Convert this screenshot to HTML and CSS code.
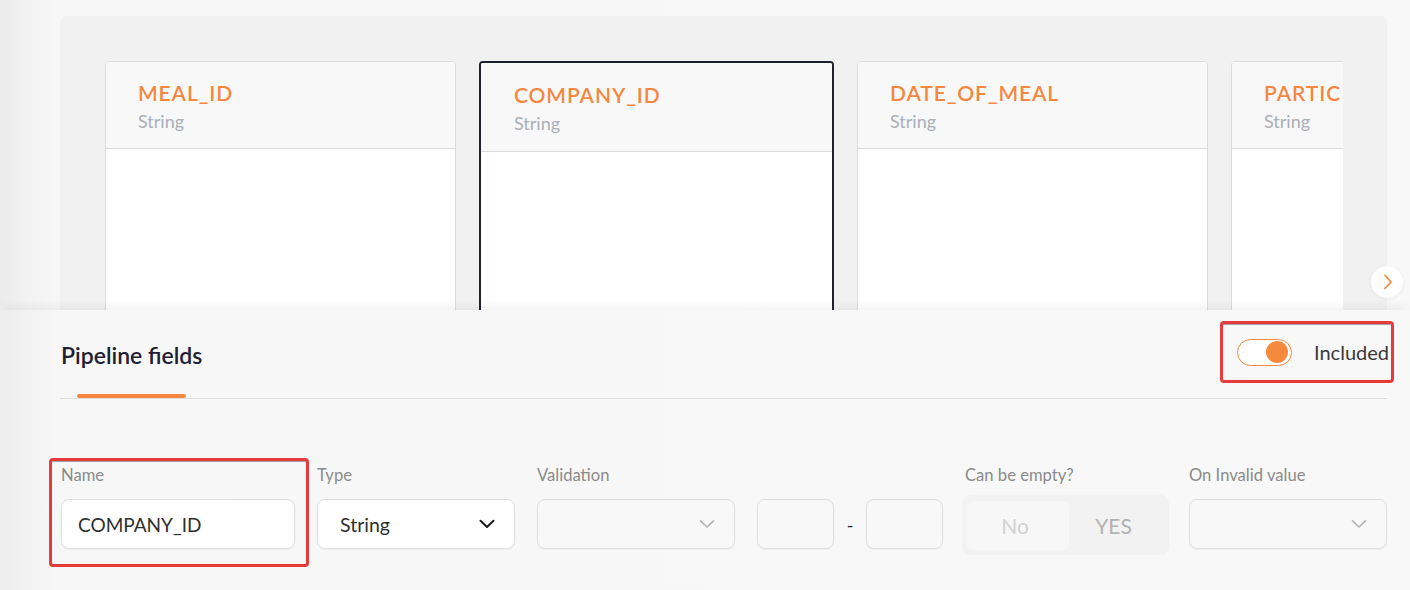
FILE: index.html
```html
<!DOCTYPE html>
<html lang="en">
<head>
<meta charset="utf-8">
<title>Pipeline fields</title>
<link rel="stylesheet" href="styles.css">
</head>
<body>
<div class="page">
  <section class="schema">
    <div class="schema-panel">
      <div class="track">
        <article class="card">
          <header class="card-head">
            <h3 class="card-title">MEAL_ID</h3>
            <p class="card-type">String</p>
          </header>
          <div class="card-body"></div>
        </article>
        <article class="card card--selected">
          <header class="card-head">
            <h3 class="card-title">COMPANY_ID</h3>
            <p class="card-type">String</p>
          </header>
          <div class="card-body"></div>
        </article>
        <article class="card">
          <header class="card-head">
            <h3 class="card-title">DATE_OF_MEAL</h3>
            <p class="card-type">String</p>
          </header>
          <div class="card-body"></div>
        </article>
        <article class="card">
          <header class="card-head">
            <h3 class="card-title">PARTIC</h3>
            <p class="card-type">String</p>
          </header>
          <div class="card-body"></div>
        </article>
      </div>
    </div>
    <button class="next" aria-label="Next">
      <svg width="10" height="16" viewBox="0 0 10 16"><path d="M2 1.5 L8 8 L2 14.5" fill="none" stroke="#f5873f" stroke-width="1.8" stroke-linecap="round" stroke-linejoin="round"/></svg>
    </button>
  </section>

  <section class="fields">
    <div class="fields-head">
      <div class="tab">
        <span class="tab-label">Pipeline fields</span>
        <span class="tab-bar"></span>
      </div>
      <div class="annot annot--toggle">
        <span class="toggle"><span class="knob"></span></span>
        <span class="toggle-label">Included</span>
      </div>
    </div>

    <div class="form-row">
      <div class="annot annot--name">
        <div class="field field--name">
          <label class="field-label">Name</label>
          <div class="input input--active">COMPANY_ID</div>
        </div>
      </div>
      <div class="field field--type">
        <label class="field-label">Type</label>
        <div class="select input--active">
          <span>String</span>
          <svg class="chev" width="16" height="10" viewBox="0 0 16 10"><path d="M1.5 1.8 L8 8 L14.5 1.8" fill="none" stroke="#1c1c1c" stroke-width="2" stroke-linecap="round" stroke-linejoin="round"/></svg>
        </div>
      </div>
      <div class="field field--validation">
        <label class="field-label">Validation</label>
        <div class="select select--disabled">
          <span></span>
          <svg class="chev" width="16" height="10" viewBox="0 0 16 10"><path d="M1.5 1.8 L8 8 L14.5 1.8" fill="none" stroke="#b3b3b3" stroke-width="1.6" stroke-linecap="round" stroke-linejoin="round"/></svg>
        </div>
      </div>
      <div class="field field--range">
        <span class="field-label">&nbsp;</span>
        <div class="range">
          <div class="input input--small"></div>
          <span class="dash">-</span>
          <div class="input input--small"></div>
        </div>
      </div>
      <div class="field field--empty">
        <label class="field-label">Can be empty?</label>
        <div class="segment">
          <span class="seg seg--on">No</span>
          <span class="seg">YES</span>
        </div>
      </div>
      <div class="field field--invalid">
        <label class="field-label">On Invalid value</label>
        <div class="select select--disabled">
          <span></span>
          <svg class="chev" width="16" height="10" viewBox="0 0 16 10"><path d="M1.5 1.8 L8 8 L14.5 1.8" fill="none" stroke="#b3b3b3" stroke-width="1.6" stroke-linecap="round" stroke-linejoin="round"/></svg>
        </div>
      </div>
    </div>
  </section>
</div>
</body>
</html>
```

FILE: styles.css
```css
* { box-sizing: border-box; }

html, body {
  margin: 0;
  padding: 0;
}

body {
  width: 1410px;
  height: 590px;
  overflow: hidden;
  font-family: "Lato", "Liberation Sans", sans-serif;
  background: linear-gradient(90deg, #ebebeb 0px, #f3f3f3 30px, #f7f7f7 60px, #f8f8f8 100%);
  color: #333;
}

.page {
  display: flex;
  flex-direction: column;
}

/* ---------- schema cards ---------- */
.schema {
  position: relative;
  padding: 16px 23px 0 60px;
}

.schema-panel {
  height: 294px;
  background: #f0f1f0;
  border-radius: 6px 6px 0 0;
  overflow: hidden;
  padding: 45px 44px 0 45px;
}

.track {
  display: flex;
  gap: 23px;
  overflow: hidden;
  height: 400px;
}

.card {
  flex: 0 0 351px;
  height: 380px;
  border: 1px solid #dcdcdc;
  border-radius: 4px;
  background: #fff;
  display: flex;
  flex-direction: column;
  overflow: hidden;
}

.card--selected {
  flex-basis: 355px;
  border: 2px solid #1e2130;
}

.card-head {
  background: #f8f8f8;
  border-bottom: 1px solid #dcdcdc;
  padding: 19px 20px 17px 32px;
}

.card--selected .card-head {
  padding: 20px 20px 18px 33px;
}

.card-title {
  margin: 0;
  font-size: 21px;
  line-height: 24px;
  font-weight: 600;
  color: #f5873f;
  letter-spacing: 0.9px;
  white-space: nowrap;
}

.card-type {
  margin: 6px 0 0;
  font-size: 18px;
  line-height: 20px;
  color: #a9afb7;
}

.card-body {
  flex: 1;
  background: #fff;
}

.next {
  position: absolute;
  right: 7px;
  top: 266px;
  width: 32px;
  height: 32px;
  border-radius: 50%;
  border: none;
  background: #fff;
  box-shadow: 0 1px 4px rgba(0,0,0,0.06);
  display: flex;
  align-items: center;
  justify-content: center;
  padding: 0 0 0 2px;
  z-index: 3;
}

/* ---------- pipeline fields ---------- */
.fields {
  position: relative;
  z-index: 2;
  background: linear-gradient(90deg, #ececec 0px, #f3f3f3 30px, #f7f7f7 60px, #f8f8f8 100%);
  box-shadow: 0 -6px 10px -4px rgba(0,0,0,0.07);
  padding: 0 23px 0 60px;
  height: 280px;
}

.fields-head {
  display: flex;
  justify-content: space-between;
  align-items: flex-start;
  border-bottom: 1px solid #dedede;
  height: 89px;
}

.tab {
  display: flex;
  flex-direction: column;
  padding-top: 32px;
}

.tab-label {
  font-size: 23px;
  line-height: 26px;
  font-weight: 600;
  color: #1f2133;
  padding-left: 1px;
}

.tab-bar {
  margin: 26px 16px 0 17px;
  height: 4px;
  border-radius: 2px;
  background: #f5873f;
}

.annot {
  border: 3px solid #e63b3b;
  border-radius: 4px;
  box-shadow: inset 0 1px 0 rgba(0,0,0,0.35);
}

.annot--toggle {
  margin-top: 11px;
  margin-right: -7px;
  width: 174px;
  height: 62px;
  display: flex;
  align-items: center;
  padding-left: 14px;
}

.toggle {
  width: 55px;
  height: 27px;
  border: 1px solid #f5873f;
  border-radius: 14px;
  background: #fff;
  display: flex;
  align-items: center;
  justify-content: flex-end;
  padding-right: 3px;
}

.knob {
  width: 22px;
  height: 22px;
  border-radius: 50%;
  background: #f58a3e;
}

.toggle-label {
  margin-left: 22px;
  font-size: 20px;
  color: #3a3a3a;
}

/* form row */
.form-row {
  display: flex;
  align-items: flex-start;
  padding-top: 66px;
}

.field {
  display: flex;
  flex-direction: column;
}

.field-label {
  display: block;
  font-size: 16.6px;
  line-height: 20px;
  color: #8b8b8b;
  margin-bottom: 14px;
  white-space: nowrap;
}

.annot--name {
  margin: -7px 0 0 -11px;
  padding: 4px 11px 15px 9px;
}

.field--name { width: 234px; }
.field--type { width: 198px; margin-left: 8px; }
.field--validation { width: 198px; margin-left: 22px; }
.field--range { margin-left: 22px; }
.field--empty { width: 207px; margin-left: 19px; }
.field--empty .field-label { padding-left: 3px; }
.field--invalid { width: 198px; margin-left: 20px; }

.input, .select {
  height: 50px;
  border: 1px solid #dedede;
  border-radius: 8px;
  background: #fff;
  box-shadow: 0 1px 2px rgba(0,0,0,0.04);
}

.input {
  padding: 0 16px;
  display: flex;
  align-items: center;
  font-size: 19px;
  color: #2f2f2f;
}

.select {
  display: flex;
  align-items: center;
  justify-content: space-between;
  padding: 0 19px 0 22px;
  font-size: 19.5px;
  color: #2f2f2f;
}

.select--disabled {
  background: #f8f8f8;
}

.range {
  display: flex;
  align-items: center;
}

.input--small {
  width: 77px;
  background: #f8f8f8;
}

.dash {
  width: 32px;
  text-align: center;
  font-size: 18px;
  color: #222;
  padding-top: 2px;
}

.segment {
  margin-top: -4px;
  height: 60px;
  width: 207px;
  background: #f2f2f2;
  border-radius: 8px;
  padding: 6px 5px 5px;
  display: flex;
}

.seg {
  flex: 1;
  display: flex;
  align-items: center;
  justify-content: center;
  padding-right: 6px;
  font-size: 21px;
  color: #b2b2b2;
}

.seg--on {
  flex: 0 0 102px;
  background: #f7f7f7;
  border-radius: 6px;
  color: #d2d2d2;
}
```
